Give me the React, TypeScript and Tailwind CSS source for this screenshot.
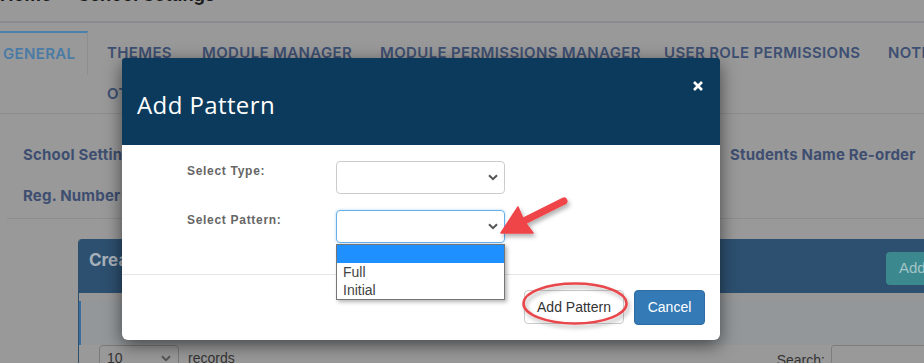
import React from "react";

const Chevron = () => (
  <svg width="10" height="7" viewBox="0 0 10 7" className="shrink-0">
    <path d="M1 1.2 L5 5.2 L9 1.2" fill="none" stroke="#555" strokeWidth="2" />
  </svg>
);

export default function App() {
  const tab = "shrink-0 font-['Inter',sans-serif] font-semibold text-[15px] tracking-[0.35px] text-[#3d4f72] whitespace-nowrap";
  const link = "shrink-0 font-['Inter',sans-serif] font-bold text-[15px] tracking-[0.2px] text-[#3e4e70] whitespace-nowrap";
  return (
    <div className="relative w-[924px] h-[363px] overflow-hidden bg-[#999999]">
      {/* background page */}
      <div className="h-[21px] overflow-hidden">
        <div className="-mt-[14px] flex gap-[26px] font-['Inter',sans-serif] font-bold text-[18px] leading-[18px] text-[#1a1a1a] whitespace-nowrap">
          <span>Home</span>
          <span>School Settings</span>
        </div>
      </div>
      <div className="h-[2px] bg-[#8a8b8e]" />
      <div className="pt-[8px]">
        <div className="flex h-[44px]">
          <div className="shrink-0 w-[88px] border-t-2 border-r border-t-[#4a80ad] border-r-[#8e8e8e] pl-[3px] flex items-center">
            <span className={tab + " text-[#4a7ba6] tracking-[0.1px]"}>GENERAL</span>
          </div>
          <div className="flex items-center">
            <span className={tab + " ml-[19px] w-[60px]"}>THEMES</span>
            <span className={tab + " ml-[35px] w-[143px]"}>MODULE MANAGER</span>
            <span className={tab + " ml-[35px] w-[249px]"}>MODULE PERMISSIONS MANAGER</span>
            <span className={tab + " ml-[35px] w-[189px]"}>USER ROLE PERMISSIONS</span>
            <span className={tab + " ml-[35px]"}>NOTIFICATIONS</span>
          </div>
        </div>
        <div className="h-[38px] flex items-center pl-[107px]">
          <span className={tab}>OTHERS</span>
        </div>
      </div>
      <div className="h-px bg-[#8d8d8d]" />
      <div className="h-[104px] pl-[23px] flex flex-col">
        <div className="flex mt-[31px] h-[20px] items-center">
          <span className={link + " w-[707px]"}>School Settings</span>
          <span className={link}>Students Name Re-order</span>
        </div>
        <div className="flex mt-[21px] h-[20px] items-center">
          <span className={link}>Reg. Number Settings</span>
        </div>
      </div>
      <div className="ml-[7px] h-px bg-[#8d8d8d]" />
      <div className="ml-[78px] mt-[20px] w-[880px] border-l border-[#2d4f6b] rounded-tl-[4px] overflow-hidden">
        <div className="h-[54px] bg-[#2d5070] flex items-start justify-between pl-[10px] pr-[22px]">
          <span className="mt-[11px] leading-[20px] font-['Inter',sans-serif] font-bold text-[17px] text-[#a8b1b9]">Create Pattern</span>
          <div className="mt-[13px] w-[50px] h-[33px] rounded-[4px] bg-[#3b898e] flex items-center pl-[13px] font-['Liberation_Sans',sans-serif] text-[15px] text-[#a3c4c6]">
            Add
          </div>
        </div>
        <div className="h-[8px] bg-[#979797]" />
        <div className="h-[44px] bg-[#93979a] border-l-[3px] border-[#3a6e9e] -ml-px" />
        <div className="flex items-start h-[30px]">
          <div className="ml-[20px] w-[80px] h-[26px] border border-[#7a7a7a] rounded-[4px] flex items-center justify-between px-[7px] font-['Liberation_Sans',sans-serif] text-[14px] text-[#333]">
            <span>10</span>
            <Chevron />
          </div>
          <span className="ml-[9px] mt-[3px] font-['Liberation_Sans',sans-serif] text-[14px] text-[#333]">records</span>
          <span className="ml-[542px] mt-[5px] font-['Liberation_Sans',sans-serif] text-[14px] text-[#333]">Search:</span>
          <div className="ml-[6px] w-[120px] h-[26px] border border-[#7d7d7d] rounded-[3px]" />
        </div>
      </div>

      {/* modal */}
      <div className="absolute left-[122px] top-[58px] w-[598px] h-[282px] bg-white rounded-[6px] shadow-[0_5px_18px_rgba(0,0,0,0.55)] flex flex-col">
        <div className="h-[87px] bg-[#0b3a5c] rounded-t-[3px] flex items-start justify-between pl-[15px] pr-[17px]">
          <span className="mt-[31px] font-['Open_Sans',sans-serif] text-[24px] leading-[32px] tracking-[0.4px] text-white">Add Pattern</span>
          <svg width="10" height="10" viewBox="0 0 10 10" className="mt-[23px]">
            <path d="M1 1 L9 9 M9 1 L1 9" stroke="white" strokeWidth="2.6" />
          </svg>
        </div>
        <div className="pt-[16px] pb-[31px] pl-[65px] flex flex-col gap-[16px] font-['Liberation_Sans',sans-serif]">
          <div className="flex items-start">
            <label className="w-[149px] text-[12px] leading-[20px] font-bold tracking-[0.7px] text-[#666]">Select Type:</label>
            <div className="w-[169px] h-[33px] border border-[#ccc] rounded-[4px] flex items-center justify-end pr-[6px]">
              <Chevron />
            </div>
          </div>
          <div className="flex items-start">
            <label className="w-[149px] text-[12px] leading-[20px] font-bold tracking-[0.7px] text-[#666]">Select Pattern:</label>
            <div className="relative w-[169px] h-[33px] border border-[#66afe9] rounded-[4px] flex items-center justify-end pr-[6px] shadow-[0_0_3px_rgba(102,175,233,0.5)]">
              <Chevron />
              <div className="absolute -left-px top-[33px] w-[169px] bg-white border border-[#767676] shadow-[2px_2px_4px_rgba(0,0,0,0.3)] text-[14px] leading-[18px] text-[#444] z-10">
                <div className="h-[18px] bg-[#1e90ff]" />
                <div className="h-[18px] pl-[6px]">Full</div>
                <div className="h-[18px] pl-[6px]">Initial</div>
              </div>
            </div>
          </div>
        </div>
        <div className="border-t border-[#e5e5e5] pt-[15px] pr-[15px] flex justify-end gap-[10px] font-['Liberation_Sans',sans-serif] text-[14px]">
          <div className="w-[100px] h-[34px] border border-[#ccc] rounded-[4px] bg-white text-[#333] flex items-center justify-center">Add Pattern</div>
          <div className="w-[71px] h-[35px] border border-[#2e6da4] rounded-[4px] bg-[#337ab7] text-white flex items-center justify-center">Cancel</div>
        </div>
      </div>

      {/* annotations */}
      <svg className="absolute inset-0 pointer-events-none" width="924" height="363" viewBox="0 0 924 363">
        <defs>
          <filter id="sh" x="-20%" y="-20%" width="140%" height="140%">
            <feDropShadow dx="2" dy="3" stdDeviation="2" floodColor="#000" floodOpacity="0.3" />
          </filter>
        </defs>
        <g filter="url(#sh)">
          <line x1="564" y1="201" x2="520" y2="223" stroke="#ef4449" strokeWidth="7" strokeLinecap="round" />
          <polygon points="501,233 518,207 524,221 533,233" fill="#ef4449" stroke="#ef4449" strokeWidth="1.5" strokeLinejoin="round" />
          <ellipse cx="575" cy="303.5" rx="51.5" ry="20" fill="none" stroke="#e8474b" strokeWidth="2.6" />
        </g>
      </svg>
    </div>
  );
}
